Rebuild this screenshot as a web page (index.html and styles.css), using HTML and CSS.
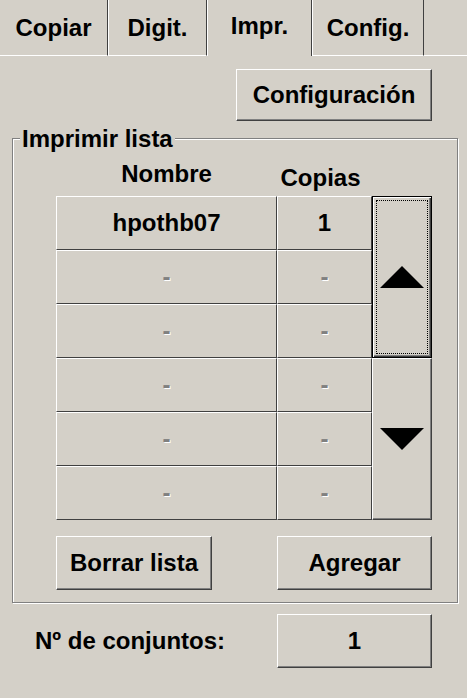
FILE: index.html
```html
<!DOCTYPE html>
<html lang="es">
<head>
<meta charset="utf-8">
<title>Impr.</title>
<link rel="stylesheet" href="styles.css">
</head>
<body>
<div class="screen">
  <div class="tabs">
    <div class="tab tab-copiar">Copiar</div>
    <div class="tab tab-digit">Digit.</div>
    <div class="tab tab-impr active">Impr.</div>
    <div class="tab tab-config">Config.</div>
    <div class="tab-fill"></div>
  </div>

  <div class="toolbar">
    <div class="btn btn-config">Configuración</div>
  </div>

  <div class="group">
    <div class="legend">Imprimir lista</div>
    <div class="cols">
      <div class="col-name">Nombre</div>
      <div class="col-copies">Copias</div>
    </div>
    <div class="list">
      <div class="scroll scroll-up focus">
        <svg width="44" height="22" viewBox="0 0 44 22"><polygon points="22,0 44,22 0,22" fill="#000"/></svg>
      </div>
      <div class="scroll scroll-down">
        <svg width="44" height="22" viewBox="0 0 44 22"><polygon points="0,0 44,0 22,22" fill="#000"/></svg>
      </div>
      <div class="cell">hpothb07</div>
      <div class="cell">1</div>
      <div class="cell empty">-</div>
      <div class="cell empty">-</div>
      <div class="cell empty">-</div>
      <div class="cell empty">-</div>
      <div class="cell empty">-</div>
      <div class="cell empty">-</div>
      <div class="cell empty">-</div>
      <div class="cell empty">-</div>
      <div class="cell empty">-</div>
      <div class="cell empty">-</div>
    </div>
    <div class="actions">
      <div class="btn btn-clear">Borrar lista</div>
      <div class="btn btn-add">Agregar</div>
    </div>
  </div>

  <div class="sets">
    <div class="sets-label">Nº de conjuntos:</div>
    <div class="btn btn-sets">1</div>
  </div>
</div>
</body>
</html>
```
FILE: styles.css
```css
html, body {
  margin: 0;
  padding: 0;
  background: #d4d0c8;
}

.screen {
  width: 467px;
  height: 698px;
  overflow: hidden;
  background: #d4d0c8;
  color: #000;
  font-family: "Liberation Sans", Arial, sans-serif;
  font-weight: bold;
  font-size: 24px;
  line-height: 28px;
}

/* Tabs */
.tabs {
  display: flex;
  height: 56px;
}

.tab {
  box-sizing: border-box;
  height: 56px;
  display: flex;
  align-items: center;
  justify-content: center;
  border-left: 1px solid #fff;
  border-right: 1px solid #404040;
  border-bottom: 1px solid #fff;
}

.tab-copiar { width: 108px; border-left: none; }
.tab-digit { width: 99px; }
.tab-impr { width: 105px; }
.tab-config { width: 112px; }

.tab.active {
  border-bottom: none;
  padding-bottom: 4px;
}

.tab-fill {
  flex: 1;
  border-bottom: 1px solid #fff;
}

/* Generic raised button */
.btn {
  box-sizing: border-box;
  display: flex;
  align-items: center;
  justify-content: center;
  background: #d4d0c8;
  border-top: 1px solid #fff;
  border-left: 1px solid #fff;
  border-right: 1px solid #404040;
  border-bottom: 1px solid #404040;
  box-shadow: inset -1px -1px 0 #808080;
}

.toolbar {
  display: flex;
  justify-content: flex-end;
  padding: 13px 35px 0 0;
}

.btn-config {
  width: 196px;
  height: 52px;
}

/* Group box */
.group {
  box-sizing: border-box;
  width: 446px;
  margin: 17px 0 0 12px;
  border: 1px solid #808080;
  box-shadow: inset 1px 1px 0 #fff, 1px 1px 0 #fff;
  padding: 0 25px 12px 43px;
}

.legend {
  width: max-content;
  margin: -14px 0 0 -36px;
  padding: 0 2px;
  background: #d4d0c8;
}

.cols {
  display: grid;
  grid-template-columns: 221px 95px 60px;
  grid-template-rows: 28px;
  margin-top: 7px;
  text-align: center;
}

.col-copies {
  padding: 4px 8px 0 0;
}

.list {
  display: grid;
  grid-template-columns: 221px 95px 60px;
  grid-template-rows: repeat(6, 54px);
  margin-top: 8px;
}

.cell {
  box-sizing: border-box;
  display: flex;
  align-items: center;
  justify-content: center;
  border-top: 1px solid #fff;
  border-left: 1px solid #fff;
  border-right: 1px solid #404040;
  border-bottom: 1px solid #404040;
}

.cell.empty {
  color: #808080;
  text-shadow: 1px 1px 0 #fff;
}

.scroll {
  box-sizing: border-box;
  grid-column: 3;
  display: flex;
  align-items: center;
  justify-content: center;
  border-top: 1px solid #fff;
  border-left: 1px solid #fff;
  border-right: 1px solid #404040;
  border-bottom: 1px solid #404040;
  box-shadow: inset -1px -1px 0 #808080;
}

.scroll svg { display: block; }

.scroll-up { grid-row: 1 / span 3; }
.scroll-down { grid-row: 4 / span 3; }

.scroll.focus {
  border: 1px solid #000;
  box-shadow: inset 1px 1px 0 #fff, inset -1px -1px 0 #404040, inset -2px -2px 0 #808080;
  outline: 1px dotted #000;
  outline-offset: -5px;
}

.actions {
  display: flex;
  justify-content: space-between;
  margin-top: 16px;
}

.btn-clear { width: 156px; height: 54px; }
.btn-add { width: 155px; height: 54px; }

/* Sets row */
.sets {
  display: flex;
  align-items: center;
  margin-top: 11px;
  padding: 0 35px 0 35px;
}

.btn-sets {
  margin-left: auto;
  width: 155px;
  height: 54px;
}
```
